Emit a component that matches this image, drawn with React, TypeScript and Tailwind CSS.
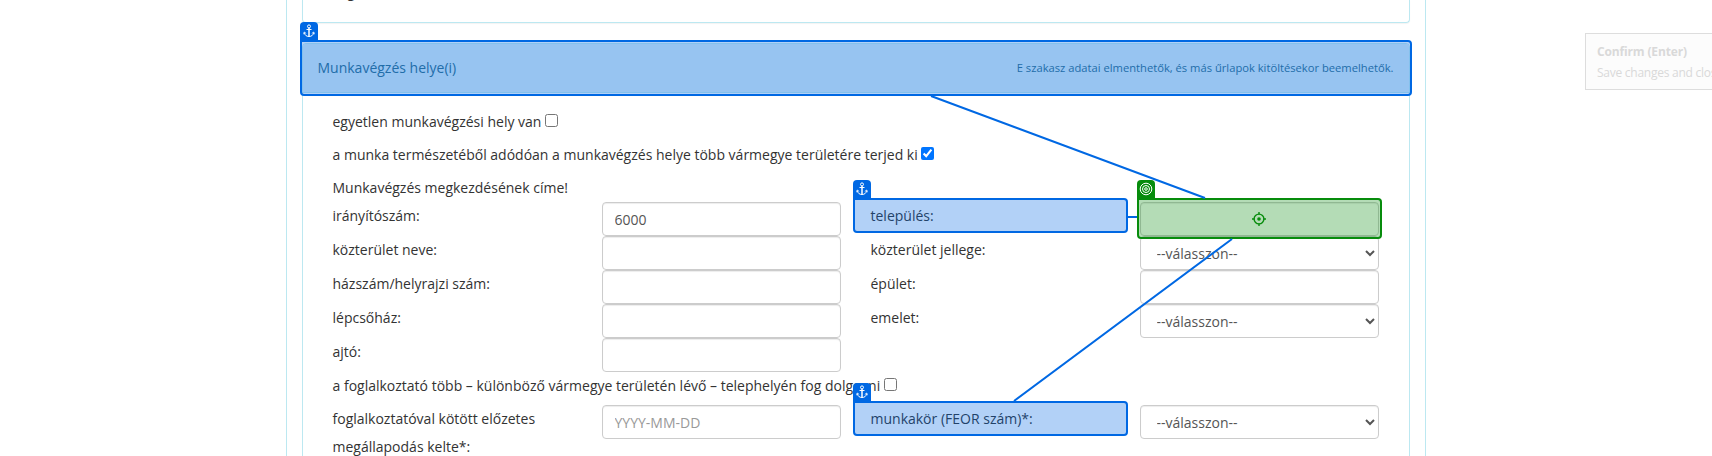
import type { ReactNode } from "react";

function AnchorIcon() {
  return (
    <svg width="12" height="14" viewBox="0 0 12 14" fill="none" stroke="#fff" strokeWidth="1">
      <circle cx="6" cy="2.4" r="1.5" />
      <path d="M6 4V12.5" strokeWidth="1.5" />
      <path d="M3.5 5.5h5M1.4 8.6C1.6 11 3.4 12.5 6 12.5s4.4-1.5 4.6-3.9" />
      <path d="M.6 10.2L1.2 8l2 1.4M11.4 10.2L10.8 8l-2 1.4" strokeWidth="0.8" />
    </svg>
  );
}

function SpiralIcon() {
  return (
    <svg width="14" height="14" viewBox="0 0 14 14" fill="none" stroke="#fff" strokeWidth="1">
      <circle cx="7" cy="7" r="5.8" />
      <circle cx="7" cy="7" r="3.5" />
      <circle cx="7" cy="7" r="1.3" />
    </svg>
  );
}

function AnchorMark({ className }: { className: string }) {
  return (
    <span className={`absolute z-10 rounded-b rounded-tr border-2 border-[#0068e3] bg-[#0068e3]/30 ${className}`}>
      <span className="absolute -left-0.5 -top-5 flex h-[18px] w-[18px] items-center justify-center rounded-t bg-[#0068e3]">
        <AnchorIcon />
      </span>
    </span>
  );
}

function TargetMark() {
  return (
    <span className="absolute -bottom-[3px] -left-[3px] -right-[3px] -top-1 z-10 flex items-center justify-center rounded-b rounded-tr border-2 border-[#078c0c] bg-[#078c0c]/30">
      <span className="absolute -left-0.5 -top-5 flex h-[18px] w-[18px] items-center justify-center rounded-t bg-[#078c0c]">
        <SpiralIcon />
      </span>
      <svg width="14" height="14" viewBox="0 0 14 14" fill="none" stroke="#078c0c" strokeWidth="1.4">
        <circle cx="7" cy="7" r="4.9" />
        <path d="M7 0v2.5M7 11.5V14M0 7h2.5M11.5 7H14" />
        <circle cx="7" cy="7" r="1.8" fill="#078c0c" stroke="none" />
      </svg>
    </span>
  );
}

const control =
  "block h-[34px] w-full rounded border border-[#ccc] bg-white px-3 py-1.5 text-sm leading-5 text-[#555] shadow-[inset_0_1px_1px_rgba(0,0,0,0.075)]";

function Field({ value, placeholder }: { value?: string; placeholder?: string }) {
  return <input className={`${control} placeholder:text-[#999]`} defaultValue={value} placeholder={placeholder} />;
}

function Choice() {
  return (
    <select className={control}>
      <option>--válasszon--</option>
    </select>
  );
}

function Cell({ children }: { children?: ReactNode }) {
  return <div className="relative px-[15px]">{children}</div>;
}

function Row({ children, className = "h-[34px]" }: { children: ReactNode; className?: string }) {
  return <div className={`grid grid-cols-4 ${className}`}>{children}</div>;
}

function Check({ children, checked }: { children: ReactNode; checked?: boolean }) {
  return (
    <div className="flex h-[33px] items-start whitespace-nowrap px-[15px]">
      {children}
      <input type="checkbox" defaultChecked={checked} className="ml-[3.5px] mt-1.5 h-[13px] w-[13px]" />
    </div>
  );
}

export default function App() {
  return (
    <div className="relative h-[456px] w-[1712px] overflow-hidden bg-white font-['Open_Sans',sans-serif] text-sm leading-7 text-[#333]">
      <div className="ml-[285.5px] h-[456px] w-[1140px] border-x border-[#bce8f1] px-[15px]">
        <div className="flex h-[23px] items-end rounded-b border border-t-0 border-[#bce8f1] pb-4 pl-[30px] shadow-[0_1px_1px_rgba(0,0,0,0.05)]">
          <span>vég</span>
        </div>

        <div className="mt-5 h-[500px] rounded border border-[#bce8f1]">
          <div className="relative flex h-[49px] items-center justify-between rounded-t-[3px] border-b border-[#bce8f1] bg-[#d9edf7] px-[15px] pb-px text-[#31708f]">
            <span>Munkavégzés helye(i)</span>
            <span className="text-[11.2px]">E szakasz adatai elmenthetők, és más űrlapok kitöltésekor beemelhetők.</span>
            <AnchorMark className="-inset-x-[3px] -bottom-1 -top-1" />
          </div>

          <div className="px-[15px] pt-[15px]">
            <Check>egyetlen munkavégzési hely van</Check>
            <Check checked>a munka természetéből adódóan a munkavégzés helye több vármegye területére terjed ki</Check>
            <div className="h-7 px-[15px]">Munkavégzés megkezdésének címe!</div>
            <Row>
              <Cell>irányítószám:</Cell>
              <Cell><Field value="6000" /></Cell>
              <Cell>
                település:
                <AnchorMark className="-left-[3px] -right-[3px] -top-1 h-[35px]" />
              </Cell>
              <div className="px-[15px]">
                <div className="relative">
                  <Field />
                  <TargetMark />
                </div>
              </div>
            </Row>
            <Row>
              <Cell>közterület neve:</Cell>
              <Cell><Field /></Cell>
              <Cell>közterület jellege:</Cell>
              <Cell><Choice /></Cell>
            </Row>
            <Row>
              <Cell>házszám/helyrajzi szám:</Cell>
              <Cell><Field /></Cell>
              <Cell>épület:</Cell>
              <Cell><Field /></Cell>
            </Row>
            <Row>
              <Cell>lépcsőház:</Cell>
              <Cell><Field /></Cell>
              <Cell>emelet:</Cell>
              <Cell><Choice /></Cell>
            </Row>
            <Row>
              <Cell>ajtó:</Cell>
              <Cell><Field /></Cell>
            </Row>
            <Check>a foglalkoztató több – különböző vármegye területén lévő – telephelyén fog dolgozni</Check>
            <Row className="h-14">
              <Cell>foglalkoztatóval kötött előzetes megállapodás kelte*:</Cell>
              <Cell><Field placeholder="YYYY-MM-DD" /></Cell>
              <Cell>
                munkakör (FEOR szám)*:
                <AnchorMark className="-left-[3px] -right-[3px] -top-1 h-[35px]" />
              </Cell>
              <Cell><Choice /></Cell>
            </Row>
          </div>
        </div>
      </div>

      <svg className="pointer-events-none absolute inset-0 z-20" width="1712" height="456" fill="none" stroke="#0068e3" strokeWidth="2">
        <path d="M931 96L1205 198M1128 217H1137M1232 239L1014 401" />
      </svg>

      <div className="absolute left-[1585px] top-[33px] h-[57px] w-[200px] whitespace-nowrap border border-[#ddd] bg-[#fcfcfc] px-[11px] pt-[7px] text-xs leading-[21px] text-[#d9d9d9]">
        <div className="font-bold tracking-[-0.15px]">Confirm (Enter)</div>
        <div className="tracking-[-0.25px]">Save changes and close</div>
      </div>
    </div>
  );
}
